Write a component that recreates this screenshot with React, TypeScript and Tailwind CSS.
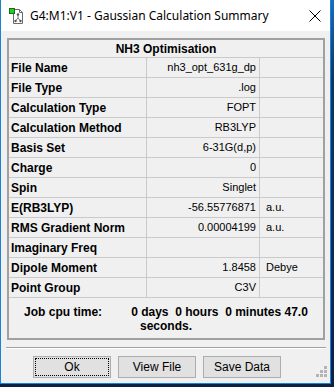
import React from 'react';

const rows = [
  { label: 'File Name', value: 'nh3_opt_631g_dp', unit: '' },
  { label: 'File Type', value: '.log', unit: '' },
  { label: 'Calculation Type', value: 'FOPT', unit: '' },
  { label: 'Calculation Method', value: 'RB3LYP', unit: '' },
  { label: 'Basis Set', value: '6-31G(d,p)', unit: '' },
  { label: 'Charge', value: '0', unit: '' },
  { label: 'Spin', value: 'Singlet', unit: '' },
  { label: 'E(RB3LYP)', value: '-56.55776871', unit: 'a.u.' },
  { label: 'RMS Gradient Norm', value: '0.00004199', unit: 'a.u.' },
  { label: 'Imaginary Freq', value: '', unit: '' },
  { label: 'Dipole Moment', value: '1.8458', unit: 'Debye' },
  { label: 'Point Group', value: 'C3V', unit: '' },
];

// small gaussview document icon with green marker
function GaussIcon() {
  return (
    <svg width="16" height="16" viewBox="0 0 16 16">
      <path d="M4.5 1.5h6l3 3v11h-9z" fill="#fff" stroke="#6b6b6b" />
      <path d="M10.5 1.5v3h3" fill="none" stroke="#6b6b6b" />
      <g stroke="#7a7a7a" strokeWidth="1">
        <line x1="9" y1="7" x2="9" y2="10" />
        <line x1="9" y1="10" x2="6.5" y2="13" />
        <line x1="9" y1="10" x2="11.5" y2="13" />
      </g>
      <circle cx="9" cy="6.5" r="1.2" fill="#555" />
      <circle cx="6.5" cy="13" r="1.2" fill="#555" />
      <circle cx="11.5" cy="13" r="1.2" fill="#555" />
      <rect x="0.5" y="0.5" width="5" height="5" fill="#1fd31f" stroke="#1a6b1a" />
    </svg>
  );
}

function Btn({ label, focused }: { label: string; focused?: boolean }) {
  return (
    <div className="relative w-[78px] h-[22px] bg-[#e1e1e1] border border-[#adadad] flex items-center justify-center text-[12px] text-black">
      {focused && <div className="absolute inset-[1px] border border-dotted border-black" />}
      {label}
    </div>
  );
}

export default function App() {
  return (
    <div
      className="w-[334px] h-[387px] bg-gradient-to-b from-[#1a6cc0] via-[#0d3766] via-20% to-[#0a2345] overflow-hidden"
      style={{ fontFamily: '"Liberation Sans", Arial, sans-serif' }}
    >
      <div className="relative w-[331px] h-[384px] bg-[#f0f0f0] border-x border-b border-[#1883d7] flex flex-col">
        {/* Title bar */}
        <div className="h-[31px] bg-white flex items-center shrink-0">
          <div className="ml-[8px] mr-[5px] flex items-center">
            <GaussIcon />
          </div>
          <span
            className="text-[12px] text-black flex-1"
            style={{ fontFamily: '"Noto Sans", "Open Sans", sans-serif' }}
          >
            G4:M1:V1 - Gaussian Calculation Summary
          </span>
          <svg width="12" height="12" viewBox="0 0 12 12" className="mr-[9px]">
            <path d="M0.5 0.5l11 11M11.5 0.5l-11 11" stroke="#000" strokeWidth="1" />
          </svg>
        </div>

        {/* Summary table */}
        <div className="ml-[6px] mt-[7px] w-[318px] border-2 border-[#a0a0a0]">
          <div className="h-[17px] flex items-center justify-center text-[12px] font-bold text-black">
            NH3 Optimisation
          </div>
          {rows.map((r) => (
            <div key={r.label} className="h-[20px] flex border-t border-[#cacaca]">
              <div className="w-[138px] border-r border-[#cacaca] pl-[2px] flex items-center text-[12px] font-bold text-black">
                {r.label}
              </div>
              <div className="w-[113px] border-r border-[#cacaca] pr-[3px] flex items-center justify-end text-[11px] text-black">
                {r.value}
              </div>
              <div className="flex-1 pl-[6px] flex items-center text-[11px] text-black">{r.unit}</div>
            </div>
          ))}
          <div className="h-[41px] border-t border-[#cacaca] pt-[7px] flex flex-col items-center text-[12px] font-bold text-black leading-[14px]">
            <div className="whitespace-pre">
              <span>Job cpu time:</span>
              <span className="ml-[29px]">0 days  0 hours  0 minutes 47.0</span>
            </div>
            <div>seconds.</div>
          </div>
        </div>

        {/* separator */}
        <div className="ml-[5px] mt-[7px] w-[320px] h-[2px] border-t border-[#a0a0a0] border-b border-b-white" />

        {/* buttons */}
        <div className="ml-[32px] mt-[7px] flex gap-[7px]">
          <Btn label="Ok" focused />
          <Btn label="View File" />
          <Btn label="Save Data" />
        </div>

        {/* resize grip */}
        <div className="absolute right-[3px] bottom-[6px] grid grid-cols-3 gap-[1px] w-[11px]">
          <div className="w-[3px] h-[3px]" />
          <div className="w-[3px] h-[3px]" />
          <div className="w-[3px] h-[3px] bg-[#b4b4b4]" />
          <div className="w-[3px] h-[3px]" />
          <div className="w-[3px] h-[3px] bg-[#b4b4b4]" />
          <div className="w-[3px] h-[3px] bg-[#b4b4b4]" />
          <div className="w-[3px] h-[3px] bg-[#b4b4b4]" />
          <div className="w-[3px] h-[3px] bg-[#b4b4b4]" />
          <div className="w-[3px] h-[3px] bg-[#b4b4b4]" />
        </div>
      </div>
    </div>
  );
}
